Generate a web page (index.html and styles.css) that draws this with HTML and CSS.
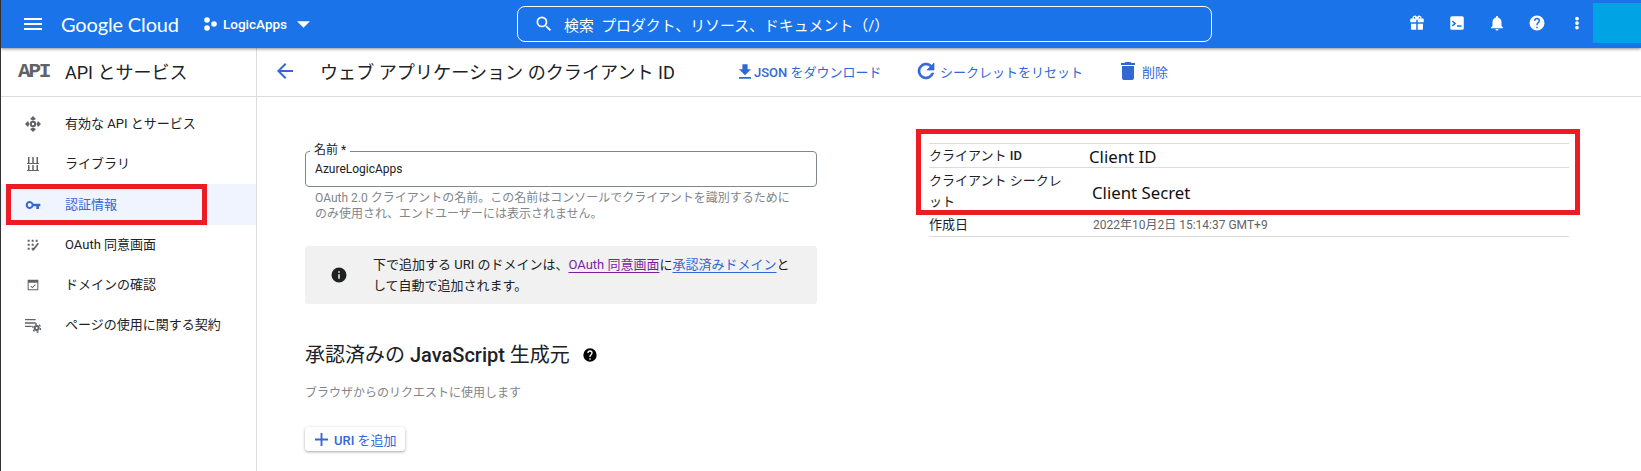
FILE: index.html
```html
<!DOCTYPE html>
<html lang="ja">
<head>
<meta charset="utf-8">
<title>ウェブ アプリケーション のクライアント ID</title>
<link rel="stylesheet" href="styles.css">
</head>
<body>
<header class="topbar">
  <svg class="menu-icon" viewBox="0 0 18 12"><path d="M0 0h18v2H0zM0 5h18v2H0zM0 10h18v2H0z"/></svg>
  <span class="logo">Google Cloud</span>
  <button class="project">
    <svg class="project-icon" viewBox="0 0 13 14"><circle cx="3" cy="3" r="2.8"/><circle cx="3" cy="11" r="2.8"/><circle cx="10" cy="7" r="2.8"/></svg>
    <span>LogicApps</span>
    <svg class="caret" viewBox="0 0 12 6"><path d="M0 0h12L6 6z"/></svg>
  </button>
  <div class="search">
    <svg class="search-icon" viewBox="0 0 24 24"><path d="M15.5 14h-.79l-.28-.27A6.471 6.471 0 0 0 16 9.5 6.5 6.5 0 1 0 9.5 16c1.61 0 3.09-.59 4.23-1.57l.27.28v.79l5 4.99L20.49 19l-4.99-5zm-6 0C7.01 14 5 11.99 5 9.5S7.01 5 9.5 5 14 7.01 14 9.5 11.99 14 9.5 14z"/></svg>
    <span>検索&nbsp; プロダクト、リソース、ドキュメント（/）</span>
  </div>
  <div class="top-actions">
    <svg viewBox="0 0 24 24"><path d="M20 6h-2.2c.1-.3.2-.7.2-1a3 3 0 0 0-5.500-1.600L12 4l-.5-.6A3 3 0 0 0 6 5c0 .3.1.7.2 1H4a1 1 0 0 0-1 1v4h8V7.500h2V11h8V7a1 1 0 0 0-1-1zM8.500 6a1 1 0 1 1 1-1l1 1zm7 0h-2l1-1a1 1 0 1 1 1 1zM4 13v7a1 1 0 0 0 1 1h6v-8zm9 0v8h6a1 1 0 0 0 1-1v-7z" fill-rule="evenodd"/></svg>
    <svg viewBox="0 0 24 24"><path fill-rule="evenodd" d="M5 3h14a2 2 0 0 1 2 2v14a2 2 0 0 1-2 2H5a2 2 0 0 1-2-2V5a2 2 0 0 1 2-2zm1.500 5.500L5 10l3 2.500L5 15l1.500 1.500L11 12.500zM12 15v2h6v-2z"/></svg>
    <svg viewBox="0 0 24 24"><path d="M12 22a2 2 0 0 0 2-2h-4a2 2 0 0 0 2 2zm6-6v-5c0-3.100-1.600-5.600-4.500-6.300V4a1.500 1.500 0 0 0-3 0v.7C7.600 5.400 6 7.900 6 11v5l-2 2v1h16v-1z"/></svg>
    <svg viewBox="0 0 24 24"><path fill-rule="evenodd" d="M12 2a10 10 0 1 0 0 20 10 10 0 0 0 0-20zm1 17h-2v-2h2zm2.100-7.700-.9.900c-.7.700-1.200 1.300-1.200 2.800h-2v-.5c0-1.100.5-2.100 1.200-2.800l1.200-1.300c.4-.3.600-.8.600-1.400a2 2 0 0 0-4 0H8a4 4 0 0 1 8 0c0 .9-.4 1.700-.9 2.300z"/></svg>
    <svg viewBox="0 0 24 24"><path d="M12 8.500a2.500 2.500 0 1 0 0-5 2.500 2.500 0 0 0 0 5zm0 1a2.500 2.500 0 1 0 0 5 2.500 2.500 0 0 0 0-5zm0 6a2.500 2.500 0 1 0 0 5 2.500 2.500 0 0 0 0-5z"/></svg>
  </div>
  <div class="account"></div>
</header>

<div class="shell">
  <aside class="sidebar">
    <div class="side-head">
      <span class="api-mark">API</span>
      <span class="side-title">API とサービス</span>
    </div>
    <nav class="side-nav">
      <a class="nav-item">
        <svg viewBox="0 0 16 16"><path fill-rule="evenodd" d="M8 0l3 3-3 1.500L5 3zM8 16l-3-3 3-1.500 3 1.500zM0 8l3-3 1.500 3L3 11zM16 8l-3 3-1.500-3L13 5zM8 4.800a3.200 3.200 0 1 0 0 6.400 3.200 3.200 0 0 0 0-6.400zm0 2a1.200 1.200 0 1 1 0 2.400 1.200 1.200 0 0 1 0-2.400z"/></svg>
        <span>有効な API とサービス</span>
      </a>
      <a class="nav-item">
        <svg viewBox="0 0 16 16"><path d="M2 7h12v1H2zM2 14h12v1H2zM3 1h1.500v6H3zM7.250 1h1.500v6h-1.500zM11.500 1H13v6h-1.500zM3 9h1.500v5H3zM7.250 9h1.500v5h-1.500zM11.500 9H13v5h-1.500z"/></svg>
        <span>ライブラリ</span>
      </a>
      <a class="nav-item is-active">
        <svg viewBox="0 0 24 24"><path fill-rule="evenodd" d="M12.650 10A6 6 0 1 0 12.650 14H17v4h4v-4h2v-4zM7 15a3 3 0 1 1 0-6 3 3 0 0 1 0 6z"/></svg>
        <span>認証情報</span>
      </a>
      <a class="nav-item">
        <svg viewBox="0 0 24 24"><path d="M4 4h3v3H4zM10 4h3v3h-3zM16 4h3v3h-3zM4 10h3v3H4zM10 10h3v3h-3zM4 16h3v3H4zM10 16h3v3h-3zM19 8.500l2 1.500-7.500 10-2.500 1 .5-2.500z"/></svg>
        <span>OAuth 同意画面</span>
      </a>
      <a class="nav-item">
        <svg viewBox="0 0 24 24"><path fill-rule="evenodd" d="M4 4h16v16H4zm1.500 4.500v10h13v-10zM8 14l1-1 2 2 4-4 1 1-5 5z"/></svg>
        <span>ドメインの確認</span>
      </a>
      <a class="nav-item">
        <svg viewBox="0 0 24 24"><path d="M0 3h16v2H0zM0 8h16v2H0zM0 13h10v2H0z"/><circle cx="17.500" cy="16.500" r="3" fill="none" stroke="currentColor" stroke-width="3"/><circle cx="17.500" cy="16.500" r="6" fill="none" stroke="currentColor" stroke-width="2" stroke-dasharray="3 3.280"/></svg>
        <span>ページの使用に関する契約</span>
      </a>
    </nav>
  </aside>

  <main class="main">
    <div class="page-head">
      <svg class="back" viewBox="0 0 16 16"><path d="M16 7H3.800l5.600-5.600L8 0 0 8l8 8 1.400-1.400L3.800 9H16z"/></svg>
      <h1 class="page-title">ウェブ アプリケーション のクライアント ID</h1>
      <div class="page-actions">
        <a class="action action-json">
          <svg viewBox="0 0 14 17"><path d="M14 6h-4V0H4v6H0l7 7zM0 15h14v2H0z"/></svg>
          <span><b>JSON</b> をダウンロード</span>
        </a>
        <a class="action action-reset">
          <svg viewBox="0 0 24 24"><path stroke="currentColor" stroke-width=".7" d="M17.650 6.350A8 8 0 1 0 19.730 14h-2.080a6 6 0 1 1-1.410-6.240L13 11h7V4z"/></svg>
          <span>シークレットをリセット</span>
        </a>
        <a class="action action-delete">
          <svg viewBox="0 0 24 24"><path d="M6 19a2 2 0 0 0 2 2h8a2 2 0 0 0 2-2V7H6zM19 4h-3.500l-1-1h-5l-1 1H5v2h14z"/></svg>
          <span>削除</span>
        </a>
      </div>
    </div>

    <div class="content">
      <section class="form-col">
        <div class="field">
          <label class="field-label">名前 *</label>
          <div class="field-value">AzureLogicApps</div>
        </div>
        <p class="hint">OAuth 2.0 クライアントの名前。この名前はコンソールでクライアントを識別するためにのみ使用され、エンドユーザーには表示されません。</p>
        <div class="notice">
          <svg class="notice-icon" viewBox="0 0 24 24"><path fill-rule="evenodd" d="M12 2a10 10 0 1 0 0 20 10 10 0 0 0 0-20zm1 15h-2v-6h2zm0-8h-2V7h2z"/></svg>
          <p>下で追加する URI のドメインは、<a class="link-visited">OAuth 同意画面</a>に<a class="link">承認済みドメイン</a>と<br>して自動で追加されます。</p>
        </div>
        <h2 class="section-title"><span>承認済みの <b>JavaScript</b> 生成元</span>
          <svg class="help" viewBox="0 0 24 24"><path fill-rule="evenodd" d="M12 2a10 10 0 1 0 0 20 10 10 0 0 0 0-20zm1 17h-2v-2h2zm2.100-7.700-.9.900c-.7.700-1.200 1.300-1.200 2.800h-2v-.5c0-1.100.5-2.100 1.200-2.800l1.200-1.300c.4-.3.600-.8.600-1.400a2 2 0 0 0-4 0H8a4 4 0 0 1 8 0c0 .9-.4 1.700-.9 2.300z"/></svg>
        </h2>
        <p class="section-desc">ブラウザからのリクエストに使用します</p>
        <button class="add-btn">
          <svg viewBox="0 0 14 14"><path d="M14 8H8v6H6V8H0V6h6V0h2v6h6z"/></svg>
          <span><b>URI</b> を追加</span>
        </button>
      </section>

      <section class="info-col">
        <dl class="info-table">
          <div class="info-row row-id"><dt>クライアント <b>ID</b></dt><dd class="annot annot-id">Client ID</dd></div>
          <div class="info-row row-secret"><dt>クライアント シークレット</dt><dd class="annot annot-secret">Client Secret</dd></div>
          <div class="info-row row-date"><dt>作成日</dt><dd>2022年10月2日 15:14:37 GMT+9</dd></div>
        </dl>
      </section>
    </div>
  </main>
</div>

<div class="mark mark-nav"></div>
<div class="mark mark-info"></div>
</body>
</html>
```

FILE: styles.css
```css
* { box-sizing: border-box; }
html, body { margin: 0; height: 100%; overflow: hidden; }
body {
  position: relative;
  font-family: Roboto, "Noto Sans CJK JP", sans-serif;
  font-size: 13px;
  color: #202124;
  background: #fff;
  border-left: 1px solid #333;
}
svg { fill: currentColor; flex: none; display: block; }
p, h1, h2, dl, dd { margin: 0; }
b { font-weight: 500; }

.topbar {
  position: relative;
  z-index: 2;
  height: 48px;
  display: flex;
  align-items: center;
  background: #1a73e8;
  color: #fff;
  box-shadow: 0 1px 3px rgba(0,0,0,.45);
}
.menu-icon { width: 18px; height: 12px; margin-left: 23px; }
.logo {
  margin-left: 19px;
  width: 143px;
  font: 400 20px Lato, Roboto, sans-serif;
  letter-spacing: -.15px;
}
.project {
  display: flex;
  align-items: center;
  padding: 0;
  border: 0;
  background: none;
  color: inherit;
  font: 500 13.500px Roboto, sans-serif;
  width: 313px;
}
.project-icon { width: 13px; height: 14px; margin-right: 6px; }
.caret { width: 13px; height: 7px; margin-left: 10px; }
.search {
  width: 695px;
  height: 36px;
  display: flex;
  align-items: center;
  padding-left: 16px;
  border: 1px solid #fff;
  border-radius: 8px;
  font-size: 14.900px;
}
.search-icon { width: 20px; height: 20px; margin-right: 10px; }
.top-actions {
  margin-left: 196px;
  display: flex;
  gap: 22px;
}
.top-actions svg { width: 18px; height: 18px; margin-top: -2px; }
.account {
  position: absolute;
  left: 1592px;
  top: 3px;
  width: 48px;
  height: 40px;
  background: #00a4e4;
}

.shell { display: flex; height: 423px; }
.sidebar { width: 256px; flex: none; border-right: 1px solid #dadce0; }
.side-head {
  height: 49px;
  display: flex;
  align-items: center;
  border-bottom: 1px solid #dadce0;
  padding: 0 0 2px 17px;
}
.api-mark {
  width: 47px;
  font: 700 21px/1 "Liberation Mono", monospace;
  color: #5f6368;
  letter-spacing: -2.200px;
}
.side-title { font-size: 18px; white-space: nowrap; }
.side-nav { padding-top: 7px; }
.nav-item {
  height: 40px;
  display: flex;
  align-items: center;
  padding-left: 24px;
  color: #5f6368;
}
.nav-item:nth-child(3) { height: 41px; }
.nav-item svg { width: 16px; height: 16px; margin-right: 24px; }
.nav-item span { color: #202124; padding-bottom: 3px; }
.nav-item.is-active { background: #f0f4fe; color: #3367d6; }
.nav-item.is-active span { color: #3367d6; }

.main { flex: 1; min-width: 0; }
.page-head {
  height: 49px;
  display: flex;
  align-items: center;
  border-bottom: 1px solid #dadce0;
  padding-bottom: 2px;
}
.back { width: 16px; height: 16px; margin-left: 20px; color: #3367d6; }
.page-title { margin: 0 0 0 27px; width: 419px; font-size: 18.100px; font-weight: 400; white-space: nowrap; }
.page-actions { display: flex; color: #3367d6; }
.action { display: flex; align-items: center; font-size: 13px; }
.action-json { width: 175px; }
.action-json svg { width: 12px; height: 15px; margin-right: 3px; }
.action-reset { width: 202px; }
.action-reset svg { width: 24px; height: 24px; margin-right: 2px; }
.action-delete svg { width: 24px; height: 24px; margin-right: 2px; }

.content { display: flex; padding-left: 48px; }
.form-col { width: 512px; padding-top: 54px; }
.field { position: relative; height: 36px; }
.field-value {
  height: 36px;
  padding: 9px 9px 0;
  border: 1px solid #80868b;
  border-radius: 4px;
  font-size: 12px;
  line-height: 16px;
}
.field-label {
  position: absolute;
  left: 5px;
  top: -8px;
  padding: 0 4px;
  background: #fff;
  font-size: 12px;
  line-height: 14px;
}
.hint {
  margin-top: 3px;
  padding: 0 24px 0 10px;
  font-size: 12px;
  line-height: 16px;
  color: #80868b;
}
.notice {
  margin-top: 24px;
  height: 58px;
  display: flex;
  align-items: center;
  padding-right: 12px;
  background: #f1f1f1;
  border-radius: 3px;
  line-height: 21px;
}
.notice-icon { width: 18px; height: 18px; margin: 0 25px; flex: none; }
.link, .link-visited { text-decoration: underline; text-underline-offset: 3px; }
.link { color: #3367d6; }
.link-visited { color: #7b1fa2; }
.section-title {
  margin-top: 38px;
  display: flex;
  align-items: center;
  font-size: 20px;
  line-height: 26px;
  font-weight: 400;
}
.help { width: 16px; height: 16px; margin-left: 12px; color: #000; }
.section-desc { margin-top: 17px; font-size: 12px; color: #80868b; line-height: 17px; }
.add-btn {
  margin-top: 25px;
  width: 100px;
  height: 24px;
  display: flex;
  align-items: center;
  padding: 0 0 0 10px;
  border: 0;
  border-radius: 3px;
  background: #fff;
  color: #3367d6;
  font: 13px Roboto, "Noto Sans CJK JP", sans-serif;
  box-shadow: 0 1px 3px rgba(0,0,0,.35);
}
.add-btn svg { width: 13px; height: 13px; margin-right: 6px; }

.info-col { margin-left: 112px; width: 640px; padding-top: 46px; }
.info-table { border-top: 1px solid #dadce0; }
.info-row { display: flex; border-bottom: 1px solid #dadce0; }
.info-row dt { width: 164px; padding-right: 22px; flex: none; }
.info-row dd { font-size: 12px; color: #5f6368; line-height: 26px; }
.row-id { height: 24px; }
.row-id dt { line-height: 24px; }
.row-secret { height: 44px; }
.row-secret dt { line-height: 21px; padding-top: 2px; }
.row-date { height: 25px; }
.row-date dt { line-height: 26px; }
.info-row .annot { font-family: "Noto Sans", sans-serif; font-size: 16.800px; color: #111; white-space: nowrap; }
.info-row .annot-id { line-height: 26px; margin-left: -4px; }
.info-row .annot-secret { line-height: 50px; margin-left: -1px; }

.mark { position: absolute; border: 5px solid #ed1c24; z-index: 3; }
.mark-nav { left: 5px; top: 184px; width: 201px; height: 41px; }
.mark-info { left: 915px; top: 129px; width: 664px; height: 86px; }
```
